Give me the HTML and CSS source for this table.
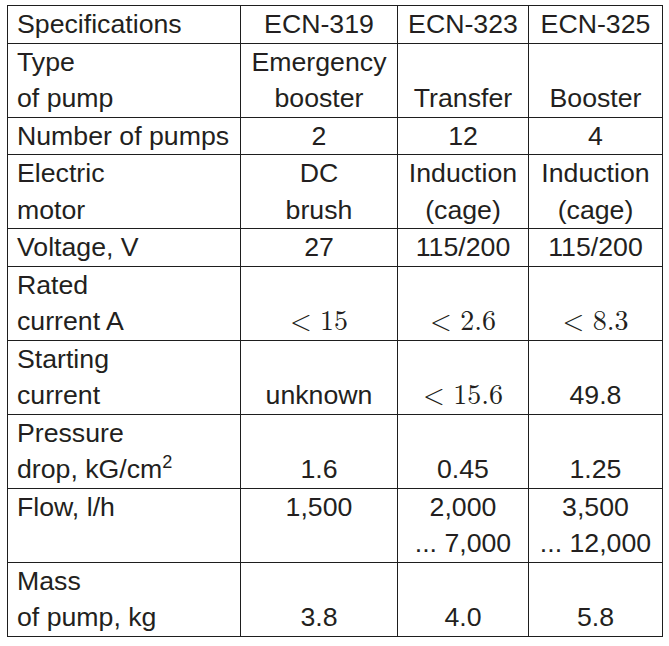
FILE: index.html
```html
<!DOCTYPE html>
<html lang="en">
<head>
  <meta charset="UTF-8" />
  <title>Pump specifications</title>
  <link rel="stylesheet" href="styles.css">
</head>
<body>
  <table class="spec">
    <colgroup>
      <col class="c-name">
      <col class="c-319">
      <col class="c-323">
      <col class="c-325">
    </colgroup>
    <tr>
      <td>Specifications</td>
      <td>ECN-319</td>
      <td>ECN-323</td>
      <td>ECN-325</td>
    </tr>
    <tr>
      <td>Type<br>of pump</td>
      <td>Emergency<br>booster</td>
      <td>Transfer</td>
      <td>Booster</td>
    </tr>
    <tr>
      <td>Number of pumps</td>
      <td>2</td>
      <td>12</td>
      <td>4</td>
    </tr>
    <tr>
      <td>Electric<br>motor</td>
      <td>DC<br>brush</td>
      <td>Induction<br>(cage)</td>
      <td>Induction<br>(cage)</td>
    </tr>
    <tr>
      <td>Voltage, V</td>
      <td>27</td>
      <td>115/200</td>
      <td>115/200</td>
    </tr>
    <tr>
      <td>Rated<br>current A</td>
      <td><span class="math"><span class="rel">&lt;</span>15</span></td>
      <td><span class="math"><span class="rel">&lt;</span>2.6</span></td>
      <td><span class="math"><span class="rel">&lt;</span>8.3</span></td>
    </tr>
    <tr>
      <td>Starting<br>current</td>
      <td>unknown</td>
      <td><span class="math"><span class="rel">&lt;</span>15.6</span></td>
      <td>49.8</td>
    </tr>
    <tr>
      <td>Pressure<br>drop, kG/cm<sup>2</sup></td>
      <td>1.6</td>
      <td>0.45</td>
      <td>1.25</td>
    </tr>
    <tr class="top">
      <td>Flow, l/h</td>
      <td>1,500</td>
      <td>2,000<br>... 7,000</td>
      <td>3,500<br>... 12,000</td>
    </tr>
    <tr>
      <td>Mass<br>of pump, kg</td>
      <td>3.8</td>
      <td>4.0</td>
      <td>5.8</td>
    </tr>
  </table>
</body>
</html>
```

FILE: styles.css
```css
* {
  box-sizing: border-box;
}

body {
  margin: 0;
  padding: 5px 7px;
  background: #fff;
}

.spec {
  width: 655px;
  table-layout: fixed;
  border-collapse: collapse;
  font-family: "Liberation Sans", Arial, sans-serif;
  font-size: 26.7px;
  line-height: 36.5px;
  color: #231f20;
}

.c-name { width: 233px; }
.c-319 { width: 157px; }
.c-323 { width: 131px; }
.c-325 { width: 134px; }

.spec td {
  border: 1px solid #1e1e1e;
  padding: 0 2px;
  text-align: center;
  vertical-align: bottom;
  white-space: nowrap;
}

.spec td:first-child {
  text-align: left;
  padding-left: 9px;
}

.spec tr.top td {
  vertical-align: top;
}

.spec sup {
  font-size: 0.68em;
  line-height: 0;
  vertical-align: 0.55em;
}

.math {
  font-family: "Latin Modern Roman", "Liberation Serif", "DejaVu Serif", serif;
  font-size: 28px;
}

.math .rel {
  margin-right: 0.3em;
}
```
